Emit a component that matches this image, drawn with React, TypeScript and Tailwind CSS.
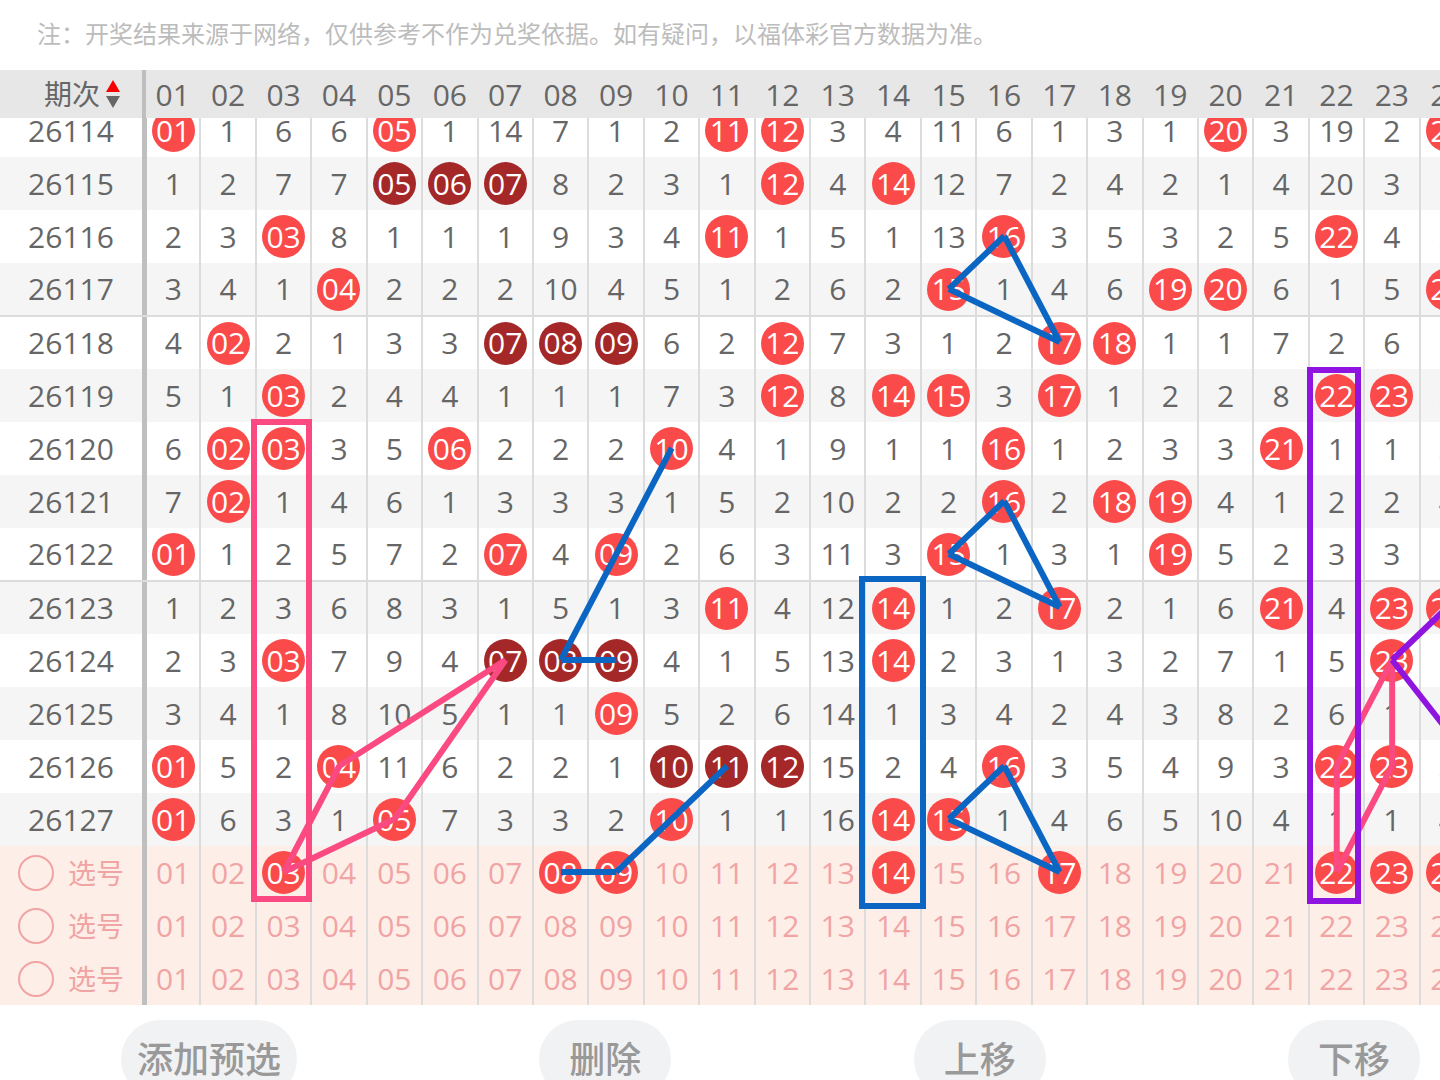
import React, { useState } from 'react';
import clsx from 'clsx';

type Point = [col: number, row: number];

interface Stroke {
  color: string;
  points: Point[];
}

interface Frame {
  color: string;
  x: number;
  y: number;
  width: number;
  height: number;
}

const COLUMNS = Array.from({ length: 24 }, (_, i) => i + 1);

// Missed-draw counters of the first issue, 0 where the number was drawn
const FIRST_MISSES = [0, 1, 6, 6, 0, 1, 14, 7, 1, 2, 0, 0, 3, 4, 11, 6, 1, 3, 1, 0, 3, 19, 2, 0];

const DRAWS = [
  { issue: 26114, hits: [1, 5, 11, 12, 20, 24] },
  { issue: 26115, hits: [5, 6, 7, 12, 14] },
  { issue: 26116, hits: [3, 11, 16, 22] },
  { issue: 26117, hits: [4, 15, 19, 20, 24] },
  { issue: 26118, hits: [2, 7, 8, 9, 12, 17, 18] },
  { issue: 26119, hits: [3, 12, 14, 15, 17, 22, 23] },
  { issue: 26120, hits: [2, 3, 6, 10, 16, 21] },
  { issue: 26121, hits: [2, 16, 18, 19] },
  { issue: 26122, hits: [1, 7, 9, 15, 19] },
  { issue: 26123, hits: [11, 14, 17, 21, 23, 24] },
  { issue: 26124, hits: [3, 7, 8, 9, 14, 23] },
  { issue: 26125, hits: [9] },
  { issue: 26126, hits: [1, 4, 10, 11, 12, 16, 22, 23] },
  { issue: 26127, hits: [1, 5, 10, 14, 15] },
];

const BLUE = '#0a66c2';
const PINK = '#fb4a82';
const PURPLE = '#8f14e0';

// Rows are counted from the first issue; row 14 is the first pick row
const STROKES: Stroke[] = [
  { color: BLUE, points: [[16, 2], [15, 3], [17, 4], [16, 2]] },
  { color: BLUE, points: [[16, 7], [15, 8], [17, 9], [16, 7]] },
  { color: BLUE, points: [[16, 12], [15, 13], [17, 14], [16, 12]] },
  { color: BLUE, points: [[10, 6], [8, 10], [9, 10]] },
  { color: BLUE, points: [[8, 14], [9, 14], [11, 12]] },
  { color: PINK, points: [[7, 10], [4, 12], [3, 14], [5, 13], [7, 10]] },
  { color: PINK, points: [[23, 10], [22, 12], [22, 14], [23, 12], [23, 10]] },
  { color: PURPLE, points: [[24, 9], [23, 10], [26, 14]] },
];

const FRAMES: Frame[] = [
  { color: PINK, x: 108, y: 318, width: 55, height: 477 },
  { color: BLUE, x: 716, y: 475, width: 61, height: 327 },
  { color: PURPLE, x: 1164, y: 266, width: 48, height: 531 },
];

const CELL_WIDTH = 1330 / 24;
const ROW_HEIGHT = 53;

const centerX = (col: number) => (col - 1) * CELL_WIDTH + 27;
const centerY = (row: number) => row * ROW_HEIGHT + 26;

const pad = (n: number) => String(n).padStart(2, '0');

// Three or more neighbouring numbers in one draw are shown in dark red
function isInRun(n: number, hits: number[]) {
  const has = (v: number) => hits.includes(v);
  return (has(n - 1) && has(n + 1)) || (has(n + 1) && has(n + 2)) || (has(n - 1) && has(n - 2));
}

function buildMisses() {
  const rows = [FIRST_MISSES];
  for (let i = 1; i < DRAWS.length; i++) {
    rows.push(rows[i - 1].map((m, c) => (DRAWS[i].hits.includes(c + 1) ? 0 : m + 1)));
  }
  return rows;
}

const MISSES = buildMisses();

const ROW = 'grid grid-cols-[146px_repeat(24,minmax(0,1fr))]';
const LABEL_CELL = 'flex items-center justify-center border-r-4 border-[#bfbfbf]';
const CELL = 'flex items-center justify-center border-r-2 border-[#dcdcdc] first-of-type:border-l first-of-type:border-l-[#bfbfbf]';

function Ball({ n, dark }: { n: number; dark?: boolean }) {
  return (
    <span
      className={clsx(
        'flex h-[43px] w-[43px] shrink-0 items-center justify-center rounded-full text-white',
        dark ? 'bg-[#a52828]' : 'bg-[#fa4a4a]'
      )}
    >
      {pad(n)}
    </span>
  );
}

function Annotations() {
  return (
    <svg
      className="pointer-events-none absolute top-0 right-0 h-full w-[calc(100%-146px)] overflow-visible"
      viewBox="0 0 1330 901"
      preserveAspectRatio="none"
      fill="none"
      strokeWidth="6"
      aria-hidden="true"
    >
      {STROKES.map((stroke, i) => (
        <g key={i} stroke={stroke.color}>
          {stroke.points.slice(1).map(([col, row], j) => (
            <line
              key={j}
              x1={centerX(stroke.points[j][0])}
              y1={centerY(stroke.points[j][1])}
              x2={centerX(col)}
              y2={centerY(row)}
              vectorEffect="non-scaling-stroke"
            />
          ))}
        </g>
      ))}
      {FRAMES.map(({ color, ...box }) => (
        <rect key={color} {...box} stroke={color} vectorEffect="non-scaling-stroke" />
      ))}
    </svg>
  );
}

function PickRow({ index, initial }: { index: number; initial: number[] }) {
  const [picked, setPicked] = useState<number[]>(initial);

  const toggle = (n: number) => {
    setPicked((prev) => (prev.includes(n) ? prev.filter((v) => v !== n) : [...prev, n]));
  };

  return (
    <tr className={`${ROW} h-[53px] bg-[#feeee8] text-[#f0a4a4]`}>
      <th scope="row" className={`${LABEL_CELL} font-normal`}>
        <label className="flex items-center gap-[14px] text-[28px] leading-8">
          <input
            type="radio"
            name="pick-row"
            value={index}
            className="h-9 w-9 appearance-none rounded-full border-2 border-[#f0a4a4] checked:bg-[#f0a4a4]"
          />
          选号
        </label>
      </th>
      {COLUMNS.map((n) => (
        <td key={n} className={CELL}>
          <button type="button" onClick={() => toggle(n)}>
            {picked.includes(n) ? <Ball n={n} /> : pad(n)}
          </button>
        </td>
      ))}
    </tr>
  );
}

export default function App() {
  return (
    <div className="flex h-screen flex-col overflow-hidden bg-white font-['Open_Sans','Noto_Sans_CJK_SC',sans-serif] text-[#666]">
      <p className="flex h-[70px] shrink-0 items-center pb-1 pl-[37px] font-['Noto_Sans_CJK_SC',sans-serif] text-2xl text-[#bcbcbc]">
        注：开奖结果来源于网络，仅供参考不作为兑奖依据。如有疑问，以福体彩官方数据为准。
      </p>

      <div className="shrink-0 overflow-hidden">
        <table className="block w-[calc(100%+36px)] text-[30px] leading-8 font-medium">
          <thead className="relative z-10 block bg-[#e7e7e7]">
            <tr className={`${ROW} h-12`}>
              <th scope="col" className={`${LABEL_CELL} gap-[6px] pl-[22px] text-[28px] font-normal`}>
                期次
                <button type="button" aria-label="排序">
                  <svg width="14" height="28" viewBox="0 0 14 28" aria-hidden="true">
                    <path d="M7 0 14 12H0Z" fill="#f80000" />
                    <path d="M0 16H14L7 28Z" fill="#666" />
                  </svg>
                </button>
              </th>
              {COLUMNS.map((n) => (
                <th key={n} scope="col" className="flex items-center justify-center pt-[2px] pr-[2px] font-medium">
                  {pad(n)}
                </th>
              ))}
            </tr>
          </thead>

          {/* the list is scrolled a little under the header */}
          <tbody className="relative -mt-[14px] block">
            {DRAWS.map(({ issue, hits }, r) => (
              <tr
                key={issue}
                className={clsx(
                  ROW,
                  'h-[53px]',
                  r % 2 ? 'bg-[#f5f5f5]' : 'bg-white',
                  issue % 5 === 2 && r < DRAWS.length - 1 && 'border-b border-[#dcdcdc]',
                  issue % 5 === 3 && 'border-t border-[#dcdcdc]'
                )}
              >
                <th scope="row" className={`${LABEL_CELL} font-medium`}>
                  {issue}
                </th>
                {COLUMNS.map((n) => (
                  <td key={n} className={CELL}>
                    {hits.includes(n) ? <Ball n={n} dark={isInRun(n, hits)} /> : MISSES[r][n - 1]}
                  </td>
                ))}
              </tr>
            ))}
            <PickRow index={1} initial={[3, 8, 9, 14, 17, 22, 23, 24]} />
            <PickRow index={2} initial={[]} />
            <PickRow index={3} initial={[]} />
            <tr className="contents">
              <td className="contents">
                <Annotations />
              </td>
            </tr>
          </tbody>
        </table>
      </div>

      <div className="mt-[15px] flex shrink-0 justify-between pr-5 pl-[121px] font-['Noto_Sans_CJK_SC',sans-serif] text-4xl text-[#999]">
        {['添加预选', '删除', '上移', '下移'].map((label) => (
          <button key={label} type="button" className="h-[78px] min-w-[132px] rounded-full bg-[#f1f2f4] px-4 pb-1 font-medium">
            {label}
          </button>
        ))}
      </div>
    </div>
  );
}
